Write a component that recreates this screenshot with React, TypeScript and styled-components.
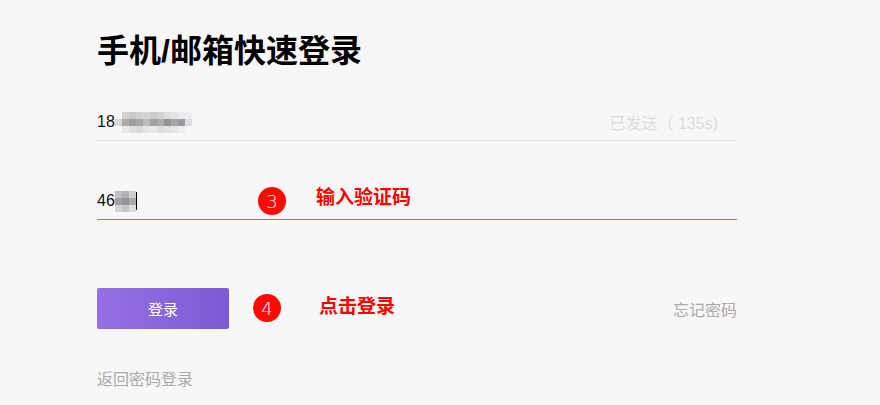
import styled, { createGlobalStyle } from "styled-components"

const GlobalStyle = createGlobalStyle`
  html, body {
    margin: 0;
    padding: 0;
    background: #f7f7f7;
  }
  body {
    font-family: "Liberation Sans", "Noto Sans CJK SC", sans-serif;
  }
`

const Page = styled.div`
  width: 880px;
  height: 405px;
  box-sizing: border-box;
  padding: 31px 0 0 97px;
  background: #f7f7f7;
  overflow: hidden;
`

const Form = styled.div`
  width: 640px;
  display: flex;
  flex-direction: column;
`

const Title = styled.h1`
  margin: 0;
  font-size: 32px;
  line-height: 40px;
  font-weight: 700;
  color: #000;
`

const Field = styled.div<{ $line: string; $top: number }>`
  position: relative;
  margin-top: ${({ $top }) => $top}px;
  height: 36px;
  display: flex;
  align-items: center;
  box-shadow: inset 0 -1px 0 ${({ $line }) => $line};
  padding-bottom: 1px;
`

const Value = styled.span`
  font-size: 16px;
  color: #111;
  line-height: 20px;
`

const Mosaic = styled.div<{ $cols: number }>`
  display: grid;
  grid-template-columns: repeat(${({ $cols }) => $cols}, 7px);
  grid-auto-rows: 7px;
`

const Cursor = styled.span`
  width: 1px;
  height: 18px;
  background: #000;
`

const Countdown = styled.span`
  margin-left: auto;
  margin-right: 19px;
  font-size: 16px;
  color: #dcdcdc;
`

const Badge = styled.span<{ $left: number; $top: number }>`
  position: absolute;
  left: ${({ $left }) => $left}px;
  top: ${({ $top }) => $top}px;
  width: 28px;
  height: 28px;
  border-radius: 50%;
  background: #ff0a00;
  color: #fff;
  font-family: "DejaVu Sans", sans-serif;
  font-weight: 300;
  font-size: 18px;
  display: flex;
  align-items: center;
  justify-content: center;
`

const Note = styled.span<{ $left: number; $top: number }>`
  position: absolute;
  left: ${({ $left }) => $left}px;
  top: ${({ $top }) => $top}px;
  font-size: 19px;
  line-height: 24px;
  font-weight: 700;
  color: #ff0000;
  white-space: nowrap;
`

const Actions = styled.div`
  position: relative;
  margin-top: 68px;
  display: flex;
  align-items: center;
  justify-content: space-between;
`

const LoginButton = styled.button`
  width: 132px;
  height: 41px;
  border: none;
  border-radius: 2px;
  background: linear-gradient(90deg, #9671e3, #7a5ad5);
  color: #fff;
  font-family: inherit;
  font-size: 15px;
  padding: 0;
`

const Link = styled.a`
  font-size: 16px;
  color: #aaa;
  text-decoration: none;
`

const BackLink = styled(Link)`
  margin-top: 40px;
  line-height: 22px;
`

const phoneCells = [
  "#f7f7f7", "#d2d2d2", "#c8c8c8", "#d0d0d0", "#d4d4d4", "#cccccc", "#d2d2d2", "#dedede", "#e2e2e2", "#eaeaea", "#eeeeee",
  "#d8d8d8", "#aeaaa6", "#9c9a9c", "#a8a6a4", "#c0bebc", "#a0a0a6", "#aeaca8", "#92949c", "#aaa8a4", "#989aa2", "#dedee2",
  "#f7f7f7", "#e8e8e8", "#e0e0e0", "#dcdcdc", "#e6e6e6", "#eaeaea", "#dedede", "#e2e2e4", "#e6e6e8", "#eeeeee", "#f7f7f7",
]

const codeCells = [
  "#c0c0c0", "#b0b0b0", "#cecece",
  "#a0a0a0", "#959595", "#aaaaaa",
  "#d2d2d2", "#c4c4c4", "#dcdcdc",
]

const App = () => {
  return (
    <>
      <GlobalStyle />
      <Page>
        <Form>
          <Title>手机/邮箱快速登录</Title>
          <Field $line="#e3e3e3" $top={33}>
            <Value>18</Value>
            <Mosaic $cols={11}>
              {phoneCells.map((c, i) => (
                <span key={i} style={{ background: c }} />
              ))}
            </Mosaic>
            <Countdown>已发送（ 135s)</Countdown>
          </Field>
          <Field $line="rgb(140, 100, 240)" $top={42}>
            <Value>46</Value>
            <Mosaic $cols={3}>
              {codeCells.map((c, i) => (
                <span key={i} style={{ background: c }} />
              ))}
            </Mosaic>
            <Cursor />
            <Badge $left={161} $top={4}>3</Badge>
            <Note $left={219} $top={3}>输入验证码</Note>
          </Field>
          <Actions>
            <LoginButton>登录</LoginButton>
            <Badge $left={156} $top={6}>4</Badge>
            <Note $left={222} $top={7}>点击登录</Note>
            <Link>忘记密码</Link>
          </Actions>
          <BackLink>返回密码登录</BackLink>
        </Form>
      </Page>
    </>
  )
}

export default App
